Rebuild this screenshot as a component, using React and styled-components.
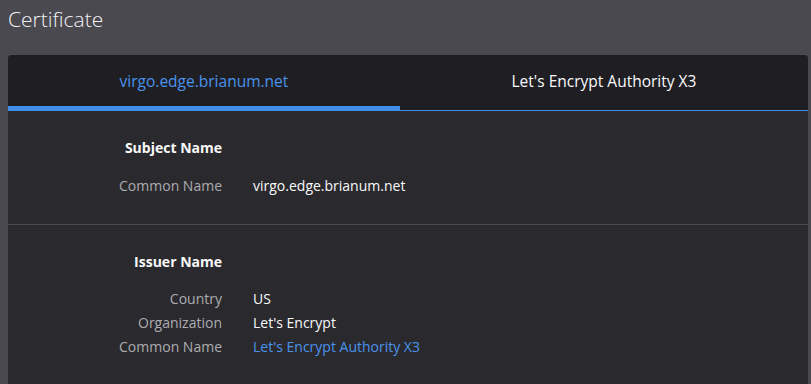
import React, { useState } from "react";
import styled, { createGlobalStyle } from "styled-components";

const Global = createGlobalStyle`
  html, body { margin: 0; padding: 0; background: #4a494f; }
  body { font-family: "Open Sans", "Noto Sans", sans-serif; color: #f9f9fa; }
`;

const Page = styled.div`
  padding: 0 3px 0 8px;
  width: 800px;
`;

const Title = styled.h1`
  margin: 0;
  height: 55px;
  padding-top: 4px;
  box-sizing: border-box;
  font-size: 21px;
  font-weight: 300;
  line-height: 30px;
  color: #f2f2f4;
`;

const Card = styled.div`
  background: #2a2a2e;
  border-radius: 4px 4px 0 0;
  overflow: hidden;
  min-height: 340px;
`;

const TabBar = styled.div`
  display: flex;
  background: #1f1f23;
  border-bottom: 1px solid #3f8ee8;
  height: 56px;
  box-sizing: border-box;
`;

const Tab = styled.button`
  flex: 1 1 auto;
  border: none;
  background: transparent;
  font-family: inherit;
  font-size: 15.5px;
  color: ${(p) => (p.$active ? "#4a93ec" : "#f9f9fa")};
  box-shadow: ${(p) => (p.$active ? "inset 0 -4px 0 #3f8ee8" : "none")};
  padding: 0 0 4px;
  cursor: pointer;
`;

const Section = styled.section`
  padding: ${(p) => p.$top}px 0 ${(p) => p.$bottom}px;
  border-top: ${(p) => (p.$divider ? "1px solid #4c4b51" : "none")};
`;

const Grid = styled.div`
  display: grid;
  grid-template-columns: 214px 1fr;
  column-gap: 31px;
  font-size: 14px;
  line-height: 24px;
`;

const Heading = styled.div`
  grid-column: 1;
  text-align: right;
  font-weight: 700;
  color: #f9f9fa;
  margin-bottom: ${(p) => p.$gap}px;
`;

const Label = styled.div`
  grid-column: 1;
  text-align: right;
  color: #acacb0;
`;

const Value = styled.div`
  grid-column: 2;
  color: ${(p) => (p.$link ? "#4a93ec" : "#f9f9fa")};
`;

export default function App() {
  const [tab, setTab] = useState(0);
  return (
    <>
      <Global />
      <Page>
        <Title>Certificate</Title>
        <Card>
          <TabBar>
            <Tab $active={tab === 0} onClick={() => setTab(0)}>virgo.edge.brianum.net</Tab>
            <Tab $active={tab === 1} onClick={() => setTab(1)}>Let's Encrypt Authority X3</Tab>
          </TabBar>
          <Section $top={25} $bottom={26}>
            <Grid>
              <Heading $gap={14}>Subject Name</Heading>
              <Label>Common Name</Label>
              <Value>virgo.edge.brianum.net</Value>
            </Grid>
          </Section>
          <Section $divider $top={25} $bottom={26}>
            <Grid>
              <Heading $gap={13}>Issuer Name</Heading>
              <Label>Country</Label>
              <Value>US</Value>
              <Label>Organization</Label>
              <Value>Let's Encrypt</Value>
              <Label>Common Name</Label>
              <Value $link>Let's Encrypt Authority X3</Value>
            </Grid>
          </Section>
        </Card>
      </Page>
    </>
  );
}
